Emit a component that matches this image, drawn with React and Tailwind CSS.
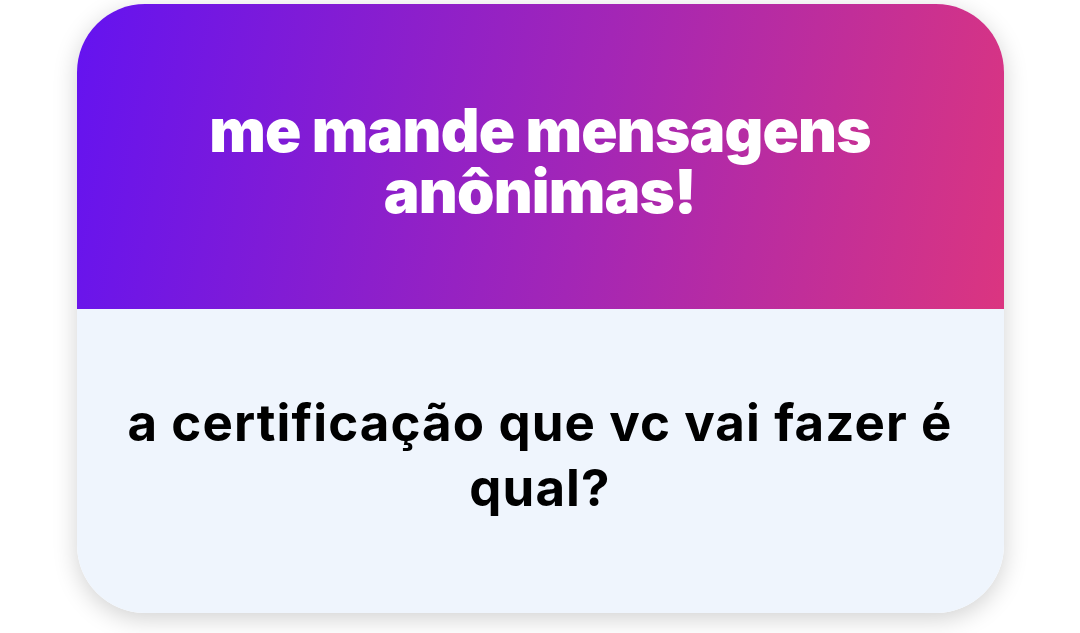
export default function App() {
  return (
    <div className="w-[1080px] h-[633px] bg-white flex flex-col items-center pt-[4px]">
      <div className="w-[927px] h-[609px] rounded-[68px] overflow-hidden flex flex-col shadow-[0_6px_24px_rgba(0,0,0,0.18)]">
        <div className="h-[305px] bg-[linear-gradient(100deg,#6413f0_0%,#a326b6_55%,#db3580_100%)] flex items-center justify-center pt-[8px]">
          <h1
            className="text-white text-center font-black text-[60px] leading-[61px] tracking-[-0.8px]"
            style={{ fontFamily: "Inter, 'Noto Sans', sans-serif" }}
          >
            me mande mensagens
            <br />
            anônimas!
          </h1>
        </div>
        <div className="flex-1 bg-[#eff5fd] flex items-center justify-center pb-[12px]">
          <p
            className="text-black text-center font-bold text-[51px] leading-[65px] tracking-[1.1px]"
            style={{ fontFamily: "Inter, 'Noto Sans', sans-serif" }}
          >
            a certificação que vc vai fazer é
            <br />
            qual?
          </p>
        </div>
      </div>
    </div>
  );
}
